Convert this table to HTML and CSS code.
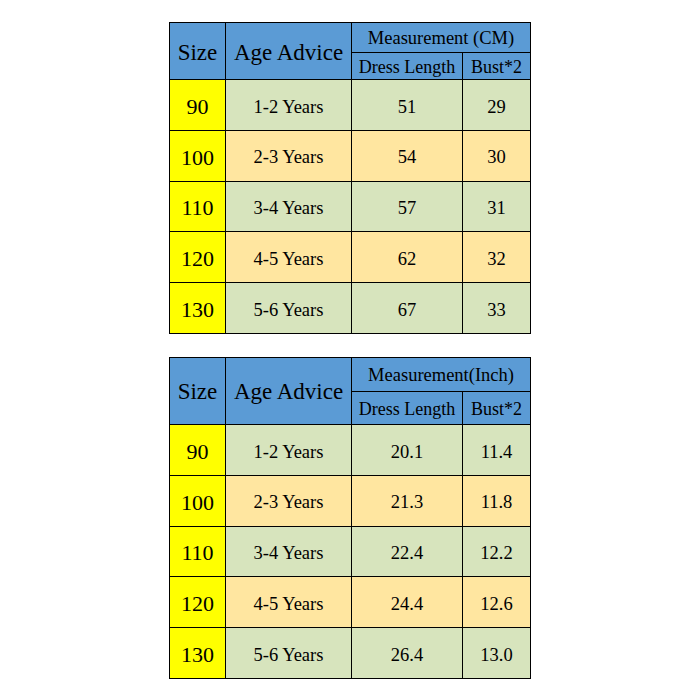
FILE: index.html
```html
<!DOCTYPE html>
<html>
<head>
<meta charset="utf-8">
<link rel="stylesheet" href="styles.css">
</head>
<body>
<div class="page">
  <table class="chart t1">
    <colgroup><col class="c1"><col class="c2"><col class="c3"><col class="c4"></colgroup>
    <tr class="h1"><th rowspan="2" class="big">Size</th><th rowspan="2" class="big">Age Advice</th><th colspan="2" class="meas">Measurement (CM)</th></tr>
    <tr class="h2"><th class="sub">Dress Length</th><th class="sub">Bust*2</th></tr>
    <tr class="g"><td class="size">90</td><td>1-2 Years</td><td>51</td><td>29</td></tr>
    <tr class="o"><td class="size">100</td><td>2-3 Years</td><td>54</td><td>30</td></tr>
    <tr class="g"><td class="size">110</td><td>3-4 Years</td><td>57</td><td>31</td></tr>
    <tr class="o"><td class="size">120</td><td>4-5 Years</td><td>62</td><td>32</td></tr>
    <tr class="g"><td class="size">130</td><td>5-6 Years</td><td>67</td><td>33</td></tr>
  </table>
  <table class="chart t2">
    <colgroup><col class="c1"><col class="c2"><col class="c3"><col class="c4"></colgroup>
    <tr class="h1"><th rowspan="2" class="big">Size</th><th rowspan="2" class="big">Age Advice</th><th colspan="2" class="meas">Measurement(Inch)</th></tr>
    <tr class="h2"><th class="sub">Dress Length</th><th class="sub">Bust*2</th></tr>
    <tr class="g"><td class="size">90</td><td>1-2 Years</td><td>20.1</td><td>11.4</td></tr>
    <tr class="o"><td class="size">100</td><td>2-3 Years</td><td>21.3</td><td>11.8</td></tr>
    <tr class="g"><td class="size">110</td><td>3-4 Years</td><td>22.4</td><td>12.2</td></tr>
    <tr class="o"><td class="size">120</td><td>4-5 Years</td><td>24.4</td><td>12.6</td></tr>
    <tr class="g"><td class="size">130</td><td>5-6 Years</td><td>26.4</td><td>13.0</td></tr>
  </table>
</div>
</body>
</html>
```
FILE: styles.css
```css
html, body {
  margin: 0;
  padding: 0;
  background: #ffffff;
}
.page {
  display: flex;
  flex-direction: column;
  align-items: flex-start;
  gap: 23px;
  padding: 22px 0 0 169px;
}
.chart {
  border-collapse: collapse;
  table-layout: fixed;
  width: 361px;
  font-family: "Liberation Serif", "Times New Roman", serif;
  color: #000;
}
.chart col.c1 { width: 56px; }
.chart col.c2 { width: 126px; }
.chart col.c3 { width: 111px; }
.chart col.c4 { width: 68px; }
.chart th, .chart td {
  border: 1px solid #000;
  padding: 2px 0 0 0;
  text-align: center;
  vertical-align: middle;
  font-weight: normal;
  white-space: nowrap;
  line-height: 1;
}
.chart th {
  background: #5b9bd5;
}
.chart th.big {
  font-size: 23px;
}
.chart th.meas {
  font-size: 18.5px;
}
.chart th.sub {
  font-size: 18px;
}
.t1 tr.h1 { height: 30px; }
.t1 tr.h2 { height: 27px; }
.t2 tr.h1 { height: 34px; }
.t2 tr.h2 { height: 33px; }
.chart tr.g, .chart tr.o { height: 50.8px; }
.chart td { font-size: 18.5px; padding-top: 4px; }
.chart tr.g td { background: #d7e4bd; }
.chart tr.o td { background: #ffe6a0; }
.chart td.size, .chart tr.g td.size, .chart tr.o td.size {
  background: #ffff00;
  font-size: 22px;
}
```
